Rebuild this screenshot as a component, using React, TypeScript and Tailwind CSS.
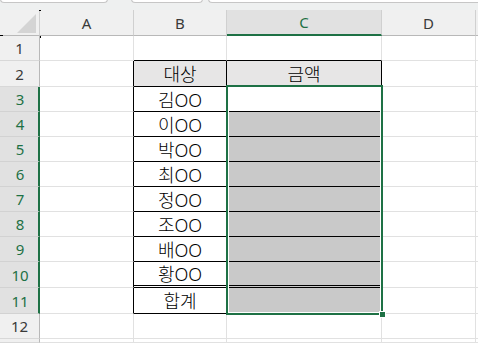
import React from 'react';

const cols = ['A', 'B', 'C', 'D'];
const rowHeights = [25, 26, 25, 25, 25, 25, 25, 25, 25, 26, 26, 25, 4];
const names: Record<number, string> = {
  2: '대상',
  3: '김OO',
  4: '이OO',
  5: '박OO',
  6: '최OO',
  7: '정OO',
  8: '조OO',
  9: '배OO',
  10: '황OO',
  11: '합계',
};

const inTable = (r: number) => r >= 2 && r <= 11;
const selected = (r: number) => r >= 3 && r <= 11;

function BodyRow({ r, h }: { r: number; h: number }) {
  const aRight = inTable(r) ? 'border-r-black' : 'border-r-[#e1e1e1]';
  const tableBottom =
    r === 10
      ? 'border-b-[3px] border-double border-b-black'
      : r >= 1 && r <= 11
        ? 'border-b border-b-black'
        : 'border-b border-b-[#e1e1e1]';
  const bRight = inTable(r) ? 'border-r-black' : 'border-r-[#e1e1e1]';
  const cBg = r === 2 ? 'bg-[#e7e6e6]' : r >= 4 && r <= 11 ? 'bg-[#c9c9c9]' : 'bg-white';
  const bBg = r === 2 ? 'bg-[#e7e6e6]' : 'bg-white';

  return (
    <div className="grid grid-cols-[40px_94px_93px_155px_94px_2px] grid-rows-[100%] overflow-hidden leading-[18px]" style={{ height: h }}>
      <div
        className={
          selected(r)
            ? 'flex items-center justify-center bg-[#e1e1e1] border-b border-b-[#d2d2d2] border-r-2 border-r-[#1e7145] text-[15px] text-[#1e7145] pl-[2px]'
            : 'flex items-center justify-center bg-[#f0f0f0] border-b border-b-[#d8d8d8] border-r border-r-[#b8b8b8] text-[15px] text-[#3a3a3a]'
        }
      >
        {r <= 12 ? r : ''}
      </div>
      <div className={`border-r border-b border-b-[#e1e1e1] ${aRight}`} />
      <div className={`flex items-center justify-center pt-[1px] border-r ${bRight} ${tableBottom} ${bBg} text-[18px] font-light text-black`}>
        {names[r] ?? ''}
      </div>
      <div className={`flex items-center justify-center pt-[1px] border-r ${bRight} ${tableBottom} ${cBg} text-[18px] font-light text-black`}>
        {r === 2 ? '금액' : ''}
      </div>
      <div className="border-r border-b border-[#e1e1e1]" />
      <div className="border-b border-[#e1e1e1]" />
    </div>
  );
}

export default function App() {
  return (
    <div
      className="relative w-[478px] h-[343px] overflow-hidden bg-white"
      style={{ fontFamily: '"Noto Sans", "Noto Sans CJK KR", sans-serif' }}
    >
      {/* formula bar remnants */}
      <div className="flex h-[10px] bg-[#eef0f0]">
        <div className="w-[108px] h-[4px] -mt-[1px] bg-white border border-t-0 border-[#c6c6c6] rounded-b-[4px]" />
        <div className="ml-[23px] w-[72px] h-[4px] -mt-[1px] bg-white border border-t-0 border-[#c6c6c6] rounded-b-[4px]" />
        <div className="ml-[5px] flex-1 h-[4px] -mt-[1px] bg-white border border-t-0 border-r-0 border-[#c6c6c6] rounded-bl-[4px]" />
      </div>

      {/* column headers */}
      <div className="grid grid-cols-[40px_94px_93px_155px_94px_2px] grid-rows-[100%] h-[26px] text-[15px] leading-[18px]">
        <div className="relative bg-[#f0f0f0] border-r border-r-[#d0d0d0] border-b border-b-[#b8b8b8]">
          <svg className="absolute left-[17px] top-[4px]" width="20" height="20" viewBox="0 0 20 20">
            <polygon points="0,19 19,19 19,0" fill="#d4d4d4" />
          </svg>
        </div>
        {cols.map((c) =>
          c === 'C' ? (
            <div
              key={c}
              className="flex items-center justify-center bg-[#e1e1e1] border-r border-r-[#d0d0d0] border-b-2 border-b-[#1e7145] text-[#1e7145]"
            >
              {c}
            </div>
          ) : (
            <div
              key={c}
              className="flex items-center justify-center bg-[#f0f0f0] border-r border-r-[#d0d0d0] border-b border-b-[#b8b8b8] text-[#3a3a3a]"
            >
              {c}
            </div>
          )
        )}
        <div className="bg-[#f0f0f0] border-b border-b-[#b8b8b8]" />
      </div>

      {rowHeights.map((h, i) => (
        <BodyRow key={i} r={i + 1} h={h} />
      ))}

      {/* selection C3:C11 */}
      <div className="absolute left-[226px] top-[85px] w-[157px] h-[230px] border-2 border-[#1e7145] shadow-[inset_0_0_0_1px_white]" />
      <div className="absolute left-[379px] top-[311px] w-[7px] h-[7px] bg-[#1e7145] border border-white" />

      {/* little marks */}
      <div className="absolute left-[39px] top-[10px] w-[2px] h-[1px] bg-black" />
      <div className="absolute left-0 top-[35px] w-[3px] h-[1px] bg-black" />
      <div className="absolute left-[40px] top-[36px] w-[1px] h-[2px] bg-black" />
    </div>
  );
}
